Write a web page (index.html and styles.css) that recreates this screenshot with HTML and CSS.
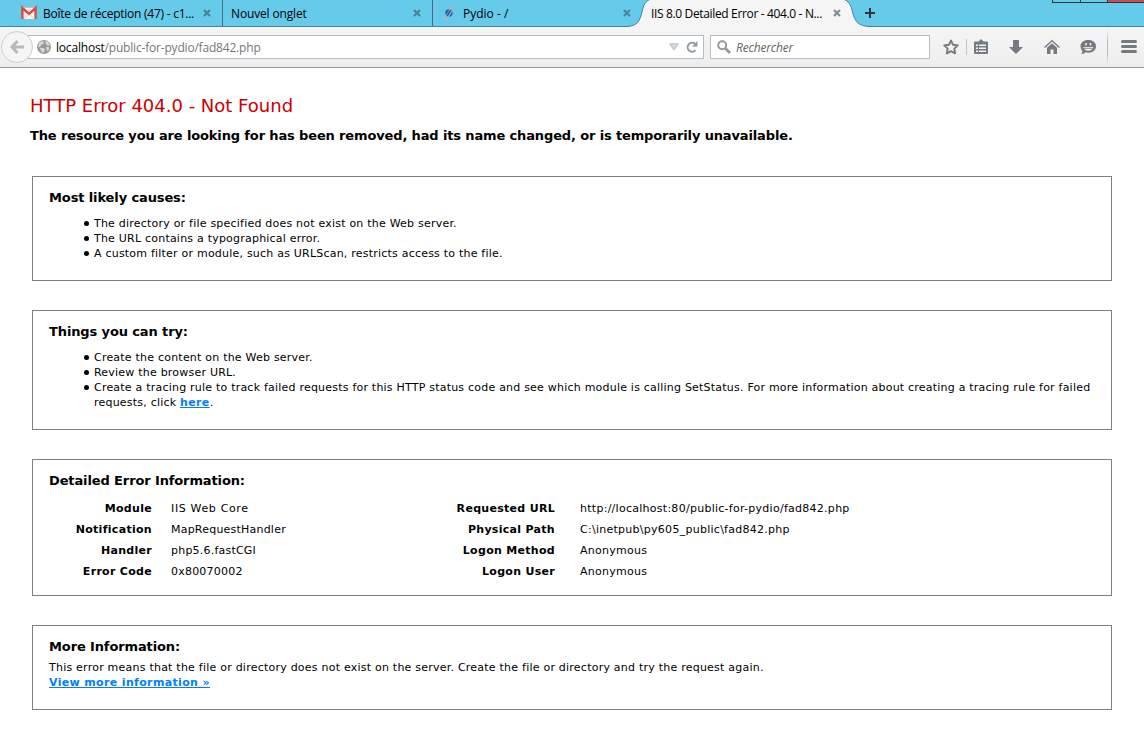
FILE: index.html
```html
<!DOCTYPE html>
<html lang="fr">
<head>
<meta charset="utf-8">
<title>IIS 8.0 Detailed Error - 404.0 - Not Found</title>
<link rel="stylesheet" href="styles.css">
</head>
<body>
<header class="tabs">
  <div class="tab">
    <svg class="fav" viewBox="0 0 16 16"><path fill="#f4f4f4" d="M1 2h14v12H1z"/><path fill="none" stroke="#dd4b40" stroke-width="2.4" d="M1.4 14V3L8 9l6.600-6v11"/><path fill="none" stroke="#e9a09a" stroke-width=".8" d="M3 13.500l4-4M13 13.500l-4-4M3 2.500h10"/></svg>
    <span class="tab-title t1">Boîte de réception (47) - c1...</span>
    <svg class="close" viewBox="0 0 8 8"><path d="M1 1l6 6M7 1L1 7"/></svg>
  </div>
  <div class="tab">
    <span class="tab-title t2">Nouvel onglet</span>
    <svg class="close" viewBox="0 0 8 8"><path d="M1 1l6 6M7 1L1 7"/></svg>
  </div>
  <div class="tab last">
    <svg class="fav" viewBox="0 0 16 16"><circle cx="8" cy="8" r="3.700" fill="#1769b0"/><ellipse cx="8" cy="8" rx="7.400" ry="1.500" transform="rotate(-58 8 8)" fill="none" stroke="#c9a9b5" stroke-width="1.100"/><path fill="#1769b0" d="M5 6.500Q6 4.300 8.300 4.400L5.500 9.500Q4 8.500 5 6.500z"/></svg>
    <span class="tab-title t3">Pydio - /</span>
    <svg class="close" viewBox="0 0 8 8"><path d="M1 1l6 6M7 1L1 7"/></svg>
  </div>
  <div class="tab active">
    <svg class="curve" viewBox="0 0 244 28"><path fill="#f5f5f5" d="M0 28V26.500C12 26.500 14 20 16 12 17.500 5 19 1 25-1H217c6 2 8 6 9.500 13 2 8 5 14.500 17.500 14.500V28z"/><path fill="none" stroke="#3d87a5" d="M0 26.500C12 26.500 14 20 16 12 17.500 5 19 1 25-1M217-1c6 2 8 6 9.500 13 2 8 5 14.500 17.500 14.500"/></svg>
    <span class="tab-title t4">IIS 8.0 Detailed Error - 404.0 - N...</span>
    <svg class="close" viewBox="0 0 8 8"><path d="M1 1l6 6M7 1L1 7"/></svg>
  </div>
  <svg class="plus" viewBox="0 0 10 10"><path d="M5 0v10M0 5h10"/></svg>
  <div class="window-buttons"><i></i><i></i><i class="red"></i></div>
</header>

<nav class="toolbar">
  <div class="back"><svg viewBox="0 0 14 14"><path fill="none" stroke="#b8b8b8" stroke-width="3" d="M7.500 1L2 7l5.500 6M2 7h12"/></svg></div>
  <div class="url">
    <svg class="globe" viewBox="0 0 14 14"><circle cx="7" cy="7" r="7" fill="#999"/><path fill="#d8d8d8" d="M2 3l3-2 2 1-1 2-2 1-1 2-2 0zM8 1l3 1 2 3-2 1-2-2zM3 8l4 0 1 2-2 3-2-2zM9 7l3 0 0 3-2 1z"/></svg>
    <span class="address"><b>localhost</b>/public-for-pydio/fad842.php</span>
    <svg class="drop" viewBox="0 0 10 8"><path fill="#d5d9e2" stroke="#b4bac4" d="M.8.8h8.400L5 7z"/></svg>
    <svg class="reload" viewBox="0 0 12 12"><path fill="none" stroke="#8f9aa6" stroke-width="2" d="M9.500 9.200A4.500 4.500 0 1 1 9 2.700"/><path fill="#8f9aa6" d="M11.500 0v5.500H6z"/></svg>
  </div>
  <div class="search">
    <svg class="lens" viewBox="0 0 14 14"><circle cx="5.200" cy="5.200" r="4" fill="none" stroke="#999" stroke-width="2"/><path stroke="#999" stroke-width="2.800" d="M8.300 8.300L13 13"/></svg>
    <span class="placeholder">Rechercher</span>
  </div>
  <div class="tools">
    <svg class="tool" viewBox="0 0 16 16"><path fill="none" stroke="#757a80" stroke-width="1.900" stroke-linejoin="round" d="M8 1.500l2 4.300 4.800.6-3.500 3.200.9 4.800L8 12.100l-4.200 2.300.9-4.800L1.200 6.400 6 5.800z"/></svg>
    <i class="thin"></i>
    <svg class="tool clip" viewBox="0 0 16 16"><path fill="#757a80" d="M1 3.500Q1 2.500 2 2.500h3.500L8 0l2.500 2.500H14q1 0 1 1V14q0 1-1 1H2q-1 0-1-1z"/><path stroke="#f2f2f2" stroke-width="1.500" d="M3 6.200h2M6 6.200h7M3 9.200h2M6 9.200h7M3 12.200h2M6 12.200h7"/></svg>
    <svg class="tool down" viewBox="0 0 16 16"><path fill="#757a80" d="M5 1.500Q5 1 5.500 1h5q.5 0 .5.500V8h4L8 15 1 8h4z"/></svg>
    <svg class="tool home" viewBox="0 0 16 16"><path fill="none" stroke="#757a80" stroke-width="1.400" d="M.6 8.500L8 1.600l7.400 6.900"/><path fill="#757a80" d="M8 4.200l5 4.600V15H9.500v-4.500h-3V15H3V8.800z"/></svg>
    <svg class="tool chat" viewBox="0 0 16 16"><path fill="#757a80" d="M8.300 1C13 1 16 3.600 16 7.300s-3 6.400-7.700 6.400q-1.500 0-2.800-.4Q4 15.300 1.300 15q1.300-1.400 1-3Q.5 10 .5 7.300C.5 3.600 3.600 1 8.300 1z"/><path fill="#f2f2f2" d="M5.300 4h1.500v2.500H5.300zM9.700 4h1.500v2.500H9.700zM3.300 8h10Q12.300 11.700 8.300 11.700T3.300 8z"/><path stroke="#757a80" stroke-width=".8" d="M4 9.300h8.600"/></svg>
    <i class="tall"></i>
    <svg class="tool menu" viewBox="0 0 16 16"><path stroke="#757a80" stroke-width="3" stroke-linecap="round" d="M1.500 2.500h13M1.500 7.500h13M1.500 12.500h13"/></svg>
  </div>
</nav>

<main class="page">
  <h1>HTTP Error 404.0 - Not Found</h1>
  <h2>The resource you are looking for has been removed, had its name changed, or is temporarily unavailable.</h2>

  <section class="box causes">
    <h3>Most likely causes:</h3>
    <ul>
      <li>The directory or file specified does not exist on the Web server.</li>
      <li>The URL contains a typographical error.</li>
      <li>A custom filter or module, such as URLScan, restricts access to the file.</li>
    </ul>
  </section>

  <section class="box try">
    <h3>Things you can try:</h3>
    <ul>
      <li>Create the content on the Web server.</li>
      <li>Review the browser URL.</li>
      <li>Create a tracing rule to track failed requests for this HTTP status code and see which module is calling SetStatus. For more information about creating a tracing rule for failed<br>requests, click <a href="#">here</a>.</li>
    </ul>
  </section>

  <section class="box details">
    <h3>Detailed Error Information:</h3>
    <dl>
      <dt>Module</dt><dd class="wide">IIS Web Core</dd><dt>Requested URL</dt><dd>http://localhost:80/public-for-pydio/fad842.php</dd>
      <dt>Notification</dt><dd>MapRequestHandler</dd><dt>Physical Path</dt><dd>C:\inetpub\py605_public\fad842.php</dd>
      <dt>Handler</dt><dd>php5.6.fastCGI</dd><dt>Logon Method</dt><dd>Anonymous</dd>
      <dt>Error Code</dt><dd>0x80070002</dd><dt>Logon User</dt><dd>Anonymous</dd>
    </dl>
  </section>

  <section class="box more">
    <h3>More Information:</h3>
    <p>This error means that the file or directory does not exist on the server. Create the file or directory and try the request again.</p>
    <p><a href="#">View more information »</a></p>
  </section>
</main>
</body>
</html>
```
FILE: styles.css
```css
* { box-sizing: border-box; }
body {
  margin: 0;
  height: 749px;
  overflow: hidden;
  background: #fff;
  color: #000;
  font: 11px/15px Verdana, "DejaVu Sans", sans-serif;
}
svg { display: block; flex: none; overflow: visible; }

/* Tab strip */
.tabs {
  display: flex;
  height: 27px;
  padding-left: 13px;
  background: #66cbea;
  border-bottom: 1px solid #3d87a5;
  font: 12px/16px "Segoe UI", "Open Sans", sans-serif;
}
.tab {
  position: relative;
  display: flex;
  align-items: center;
  width: 210px;
  height: 26px;
  padding: 0 11px 0 8px;
  border-right: 1px solid #3c6f83;
}
.tab.last, .tab.active { border-right-color: transparent; }
.fav { width: 16px; height: 16px; margin-right: 6px; }
.tab-title { position: relative; flex: 1; padding-top: 1px; white-space: nowrap; }
.t1 { letter-spacing: -.25px; }
.t2 { letter-spacing: -.15px; }
.t4 { letter-spacing: -.35px; }
.close { position: relative; width: 8px; height: 8px; }
.close path { stroke: #4a8297; stroke-width: 2.2; }
.active .close path { stroke: #858b91; }
.curve { position: absolute; left: -17px; top: 0; width: 244px; height: 28px; }
.plus { width: 10px; height: 10px; margin: 8px 0 0 12px; }
.plus path { stroke: #333; stroke-width: 2; }
.window-buttons {
  display: flex;
  width: 92px;
  height: 3px;
  margin-left: auto;
  border: solid #333;
  border-width: 0 0 1px 1px;
}
.window-buttons i { width: 28px; border-right: 1px solid #333; }
.window-buttons i:nth-child(2) { width: 27px; }
.window-buttons .red { flex: 1; background: #c75050; border: 0; }

/* Navigation toolbar */
.toolbar {
  display: flex;
  align-items: center;
  height: 41px;
  padding: 0 7px 0 1px;
  background: linear-gradient(#f5f5f5, #eee);
  border-bottom: 1px solid #999;
  font: 12px/16px "Segoe UI", "Open Sans", sans-serif;
}
.back {
  z-index: 1;
  display: flex;
  flex: none;
  align-items: center;
  justify-content: center;
  width: 32px;
  height: 32px;
  border: 1px solid #cfcfcf;
  border-radius: 50%;
  background: #f5f5f5;
}
.back svg { width: 14px; height: 14px; }
.url, .search {
  display: flex;
  align-items: center;
  height: 24px;
  background: #fff;
  border: 1px solid #b4bec8;
}
.url { width: 676px; margin-left: -5px; padding: 0 5px 0 8px; }
.globe { width: 14px; height: 14px; margin-right: 5px; }
.address { flex: 1; padding-top: 2px; color: #777; letter-spacing: -.19px; white-space: nowrap; }
.address b { color: #000; font-weight: 400; }
.drop { width: 10px; height: 8px; margin-right: 7px; }
.reload { width: 12px; height: 12px; }
.search { width: 220px; margin-left: 6px; padding-left: 6px; }
.lens { width: 14px; height: 14px; margin-right: 5px; }
.placeholder { padding-top: 2px; color: #666; font-style: italic; letter-spacing: -.2px; }
.tools { display: flex; flex: 1; align-items: center; height: 40px; margin-left: 13px; }
.tool { width: 16px; height: 16px; }
.thin { width: 1px; height: 16px; margin: 0 6px 0 7px; background: #bdc5ce; }
.tall { width: 1px; height: 36px; margin: 0 13px 0 11px; background: linear-gradient(transparent, #b5bbc2, #b5bbc2, transparent); }
.down, .home, .chat { margin-left: 20px; }
.down { margin-left: 19px; }

/* Error page */
.page { padding: 27px 32px 0; letter-spacing: .215px; }
h1, h2, h3, ul, dl, dd, p { margin: 0; }
h1 { margin-left: -2px; color: #c00; font-size: 18px; line-height: 22px; font-weight: 400; letter-spacing: 0; }
h2 { margin: 11px 0 32px -2px; font-size: 13px; line-height: 16px; letter-spacing: -.137px; white-space: nowrap; }
h3 { font-size: 13px; line-height: 16px; letter-spacing: -.12px; }
.box { margin-bottom: 29px; padding: 13px 16px 0; border: 1px solid #808080; }
.causes { height: 105px; }
.try { height: 120px; }
.details { height: 137px; }
.more { height: 85px; }
ul { margin-top: 10px; padding: 0; list-style: none; }
li { display: flow-root; padding-left: 45px; white-space: nowrap; }
li::before {
  content: "";
  float: left;
  width: 5px;
  height: 5px;
  margin: 5px 0 0 -10px;
  border-radius: 50%;
  background: #000;
}
a { color: #007eff; font-weight: 700; letter-spacing: .35px; }
dl {
  display: grid;
  grid-template-columns: 104px 274px 129px auto;
  grid-auto-rows: 21px;
  margin-top: 9px;
  line-height: 21px;
}
dt { padding-right: 1px; font-weight: 700; text-align: right; letter-spacing: .3px; }
dd { padding-left: 18px; }
dd.wide { letter-spacing: .65px; }
dd:nth-of-type(even) { padding-left: 24px; letter-spacing: .27px; }
.more h3 { margin-bottom: 5px; }
p { white-space: nowrap; letter-spacing: .228px; }
```
